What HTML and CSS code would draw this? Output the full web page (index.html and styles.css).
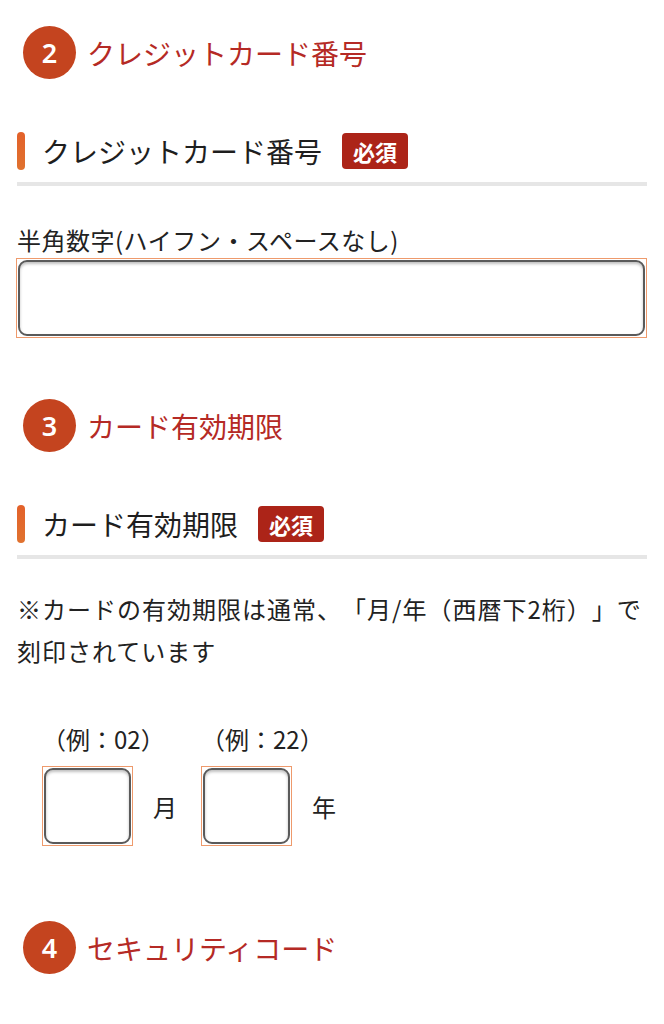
FILE: index.html
```html
<!DOCTYPE html>
<html lang="ja">
<head>
    <meta charset="UTF-8">
    <meta name="viewport" content="width=device-width, initial-scale=1.0">
    <title>お支払い情報</title>
    <link rel="stylesheet" href="styles.css">
</head>
<body>
    <div class="page">
        <div class="step">
            <span class="step-num">2</span>
            <span class="step-title">クレジットカード番号</span>
        </div>

        <div class="field-head">
            <span class="field-bar"></span>
            <span class="field-title">クレジットカード番号</span>
            <span class="badge">必須</span>
        </div>
        <label class="field-label" for="cardNumber">半角数字(ハイフン・スペースなし)</label>
        <div class="input-frame wide">
            <input type="text" id="cardNumber" class="text-input">
        </div>

        <div class="step step-next">
            <span class="step-num">3</span>
            <span class="step-title">カード有効期限</span>
        </div>

        <div class="field-head">
            <span class="field-bar"></span>
            <span class="field-title">カード有効期限</span>
            <span class="badge">必須</span>
        </div>
        <p class="note">※カードの有効期限は通常、「月/年（西暦下2桁）」で刻印されています</p>

        <div class="expiry">
            <div class="expiry-group">
                <span class="expiry-hint">（例：02）</span>
                <div class="expiry-row">
                    <div class="input-frame small">
                        <input type="text" id="expMonth" class="text-input">
                    </div>
                    <span class="expiry-unit">月</span>
                </div>
            </div>
            <div class="expiry-group">
                <span class="expiry-hint">（例：22）</span>
                <div class="expiry-row">
                    <div class="input-frame small">
                        <input type="text" id="expYear" class="text-input">
                    </div>
                    <span class="expiry-unit">年</span>
                </div>
            </div>
        </div>

        <div class="step step-last">
            <span class="step-num">4</span>
            <span class="step-title">セキュリティコード</span>
        </div>
    </div>
</body>
</html>
```

FILE: styles.css
```css
body {
    margin: 0;
    padding: 0;
    background-color: #ffffff;
    font-family: "Noto Sans CJK JP", "Noto Sans", sans-serif;
    color: #222222;
    text-spacing-trim: space-all;
}

.page {
    padding: 26px 17px 0 17px;
}

.step {
    display: flex;
    align-items: center;
    gap: 11px;
    padding-left: 6px;
    height: 53px;
}

.step-next {
    margin-top: 61px;
}

.step-last {
    margin-top: 75px;
}

.step-num {
    width: 53px;
    height: 53px;
    border-radius: 50%;
    background-color: #c4441f;
    color: #ffffff;
    font-family: "Noto Sans", sans-serif;
    font-size: 27px;
    font-weight: 600;
    display: flex;
    align-items: center;
    justify-content: center;
}

.step-title {
    font-size: 28px;
    color: #b52a25;
}

.field-head {
    display: flex;
    align-items: center;
    height: 42px;
    margin-top: 51px;
    padding-bottom: 10px;
    border-bottom: 4px solid #e6e6e6;
}

.field-bar {
    width: 8px;
    height: 38px;
    border-radius: 4px;
    background: linear-gradient(#e3612a, #e0722f);
}

.field-title {
    margin-left: 17px;
    font-size: 28px;
    color: #1e1e1e;
}

.badge {
    margin-left: 20px;
    height: 36px;
    padding: 0 11px;
    border-radius: 4px;
    background-color: #ac2418;
    color: #ffffff;
    font-size: 22px;
    font-weight: 700;
    display: flex;
    align-items: center;
}

.field-label {
    display: block;
    margin-top: 36px;
    font-size: 24px;
    line-height: 36px;
    letter-spacing: 0.5px;
}

.input-frame {
    border: 1px solid #ee9a6c;
    padding: 1px;
}

.input-frame.wide {
    margin-left: -1px;
}

.input-frame.small {
    width: 87px;
}

.text-input {
    display: block;
    box-sizing: border-box;
    width: 100%;
    height: 76px;
    border: 2px solid #5a5a5a;
    border-radius: 9px;
    box-shadow: inset 0 2px 3px rgba(0, 0, 0, 0.25);
    background: #ffffff;
    font-size: 24px;
    padding: 0 10px;
    outline: none;
}

.note {
    margin: 29px 0 0 0;
    font-size: 24px;
    line-height: 42px;
    letter-spacing: 1px;
}

.expiry {
    display: flex;
    gap: 24px;
    margin-top: 49px;
    padding-left: 25px;
}

.expiry-group {
    display: flex;
    flex-direction: column;
    gap: 9px;
}

.expiry-hint {
    font-size: 24px;
    line-height: 36px;
}

.expiry-row {
    display: flex;
    align-items: center;
    gap: 20px;
}

.expiry-unit {
    font-size: 24px;
}
```
